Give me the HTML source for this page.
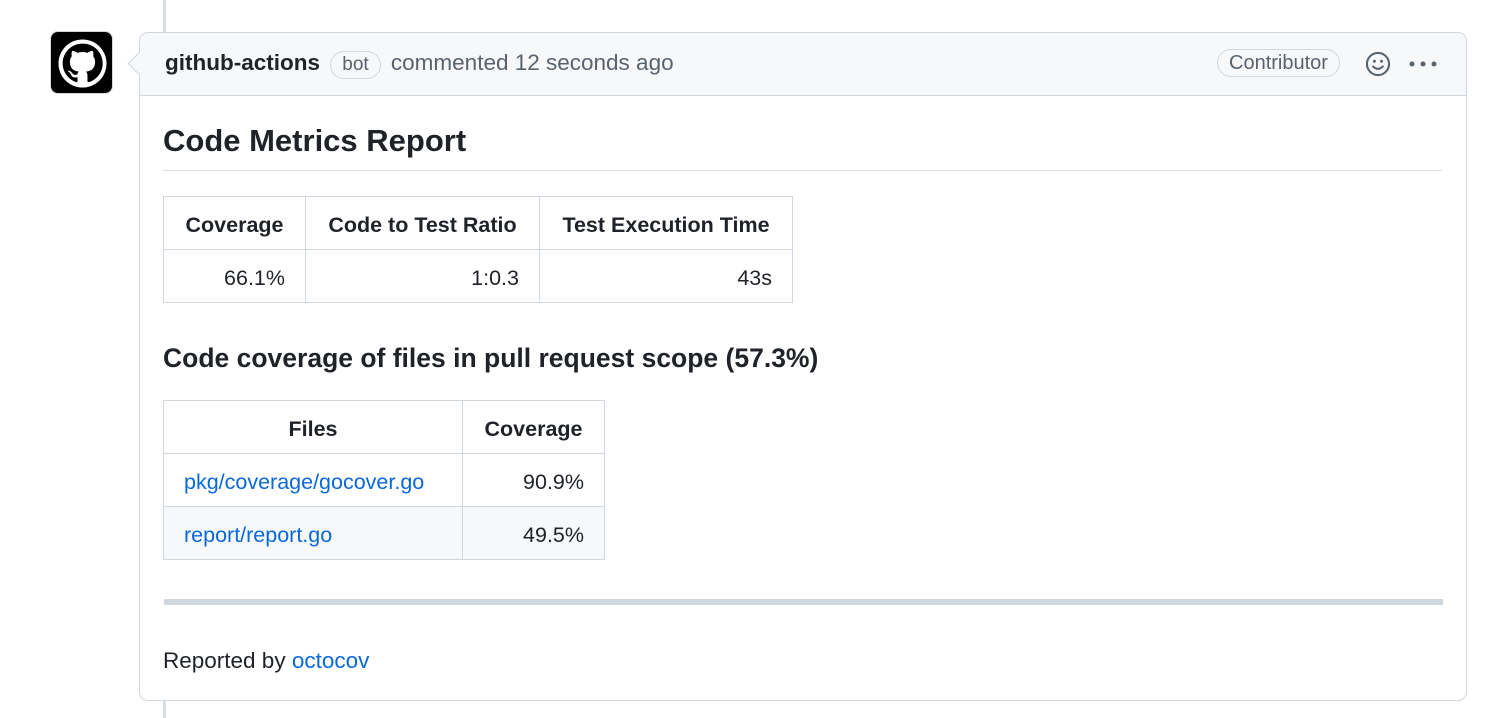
<!DOCTYPE html>
<html><head><style>
body{margin:0;width:1500px;height:718px;background:#fff;font-family:"Liberation Sans",sans-serif;color:#1f2328;position:relative;overflow:hidden}
.line{position:absolute;left:163px;top:0;width:3px;height:718px;background:#d8dee4}
.av{position:absolute;left:50px;top:31px;width:63px;height:63px;background:#000;border-radius:8px;border:1px solid #d0d7de;box-sizing:border-box}
.box{position:absolute;left:139px;top:32px;width:1328px;height:669px;border:1px solid #d0d7de;border-radius:9px;box-sizing:border-box;background:#fff}
.hd{height:62px;background:#f6f8fa;border-bottom:1px solid #d0d7de;border-radius:9px 9px 0 0;position:relative;font-size:22.5px;color:#59636e}
.arrow{position:absolute;left:-9px;top:22px;width:16px;height:16px;background:#f6f8fa;border-left:1px solid #d0d7de;border-bottom:1px solid #d0d7de;transform:rotate(45deg)}
.hd .l{position:absolute;left:25px;top:17px;white-space:nowrap}
.badge{display:inline-block;border:1px solid #d0d7de;border-radius:14px;padding:2px 11px;font-size:19px;color:#59636e;line-height:22px;margin:0 4px}
.h2{position:absolute;left:23px;top:90px;font-size:31px;font-weight:bold;width:1279px;border-bottom:1px solid #d8dee4;padding-bottom:11px}
table{position:absolute;border-collapse:collapse;font-size:21.5px}
td,th{border:1px solid #d0d7de;padding:5px 20px 0;height:47px}
th{font-weight:bold}
td{text-align:right}
a{color:#0969da;text-decoration:none}
.h3{position:absolute;left:23px;top:310px;font-size:26.5px;font-weight:bold}
.hr{position:absolute;left:24px;top:566px;width:1279px;height:6px;background:#d0d7de}
.rep{position:absolute;left:23px;top:615px;font-size:22.5px}
</style></head><body>
<div class="line"></div>
<div class="av"><svg width="61" height="61" viewBox="0 0 16 16" style="position:absolute;left:1px;top:1px"><circle cx="8" cy="8" r="6.3" fill="#fff"/><path fill="#000" d="M8 2.8c-2.9 0-5.2 2.3-5.2 5.2 0 2.3 1.5 4.2 3.6 4.9.3 0 .3-.1.3-.3v-1c-1.4.3-1.7-.6-1.7-.6-.2-.6-.6-.8-.6-.8-.5-.3 0-.3 0-.3.5 0 .8.5.8.5.5.8 1.2.6 1.5.4 0-.3.2-.6.4-.7-1.2-.1-2.4-.6-2.4-2.6 0-.6.2-1 .5-1.4 0-.1-.2-.7.1-1.4 0 0 .4-.1 1.4.5.4-.1.8-.2 1.3-.2s.9.1 1.3.2c1-.7 1.4-.5 1.4-.5.3.7.1 1.3.1 1.4.3.4.5.8.5 1.4 0 2-1.2 2.5-2.4 2.6.2.2.4.5.4 1v1.5c0 .2.1.3.4.3 2.1-.7 3.6-2.6 3.6-4.9 0-2.9-2.3-5.2-5.2-5.2z"/></svg></div>
<div class="box">
<div class="hd"><div class="arrow"></div>
<div class="l"><b style="color:#1f2328">github-actions</b> <span class="badge">bot</span> commented 12 seconds ago</div>
<span class="badge" style="position:absolute;left:1073px;top:16px;font-size:20px">Contributor</span>
<svg style="position:absolute;left:1225px;top:18px" width="26" height="26" viewBox="0 0 16 16"><circle cx="8" cy="8" r="6.8" fill="none" stroke="#59636e" stroke-width="1.3"/><circle cx="5.8" cy="6.3" r=".9" fill="#59636e"/><circle cx="10.2" cy="6.3" r=".9" fill="#59636e"/><path d="M5 9.5q3 3 6 0" fill="none" stroke="#59636e" stroke-width="1.3" stroke-linecap="round"/></svg>
<svg style="position:absolute;left:1268px;top:27px" width="30" height="8"><circle cx="4" cy="4" r="2.5" fill="#59636e"/><circle cx="15" cy="4" r="2.5" fill="#59636e"/><circle cx="26" cy="4" r="2.5" fill="#59636e"/></svg>
</div>
<div class="h2">Code Metrics Report</div>
<table style="left:23px;top:163px"><tr><th style="width:101px">Coverage</th><th style="width:193px">Code to Test Ratio</th><th style="width:212px">Test Execution Time</th></tr>
<tr><td>66.1%</td><td>1:0.3</td><td>43s</td></tr></table>
<div class="h3">Code coverage of files in pull request scope (57.3%)</div>
<table style="left:23px;top:367px"><tr><th style="width:258px">Files</th><th style="width:101px">Coverage</th></tr>
<tr><td style="text-align:left"><a>pkg/coverage/gocover.go</a></td><td>90.9%</td></tr>
<tr style="background:#f6f8fa"><td style="text-align:left"><a>report/report.go</a></td><td>49.5%</td></tr></table>
<div class="hr"></div>
<div class="rep">Reported by <a>octocov</a></div>
</div>
</body></html>
